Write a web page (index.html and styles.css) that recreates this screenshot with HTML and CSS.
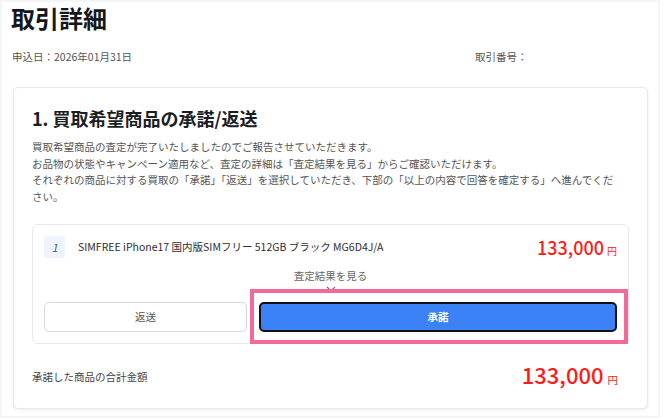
FILE: index.html
```html
<!DOCTYPE html>
<html lang="ja">
<head>
<meta charset="utf-8">
<title>取引詳細</title>
<link rel="stylesheet" href="styles.css">
</head>
<body>
<div class="page">
  <header class="header">
    <h1 class="title">取引詳細</h1>
    <div class="meta">
      <span class="date">申込日：2026年01月31日</span>
      <span class="txn">取引番号：</span>
    </div>
  </header>
  <section class="card">
    <h2 class="card-title">1. 買取希望商品の承諾/返送</h2>
    <p class="desc">買取希望商品の査定が完了いたしましたのでご報告させていただきます。<br>お品物の状態やキャンペーン適用など、査定の詳細は「査定結果を見る」からご確認いただけます。<br>それぞれの商品に対する買取の「承諾」「返送」を選択していただき、下部の「以上の内容で回答を確定する」へ進んでくだ<br>さい。</p>
    <div class="item">
      <div class="item-head">
        <span class="badge">1</span>
        <span class="name">SIMFREE iPhone17 国内版SIMフリー 512GB ブラック MG6D4J/A</span>
        <span class="price">133,000<small class="yen">円</small></span>
      </div>
      <div class="detail">
        <span class="detail-label">査定結果を見る</span>
        <svg class="chev" width="10" height="6" viewBox="0 0 10 6"><path d="M1 1 L5 5 L9 1" fill="none" stroke="#6b7280" stroke-width="1.2"/></svg>
      </div>
      <div class="actions">
        <button class="btn btn-return">返送</button>
        <div class="accept-wrap">
          <button class="btn btn-accept">承諾</button>
          <span class="highlight"></span>
        </div>
      </div>
    </div>
    <div class="total">
      <span class="total-label">承諾した商品の合計金額</span>
      <span class="total-price">133,000<small class="yen yen-lg">円</small></span>
    </div>
  </section>
</div>
</body>
</html>
```
FILE: styles.css
```css
* { box-sizing: border-box; }
html, body { margin: 0; padding: 0; background: #fff; }
body {
  font-family: "Noto Sans CJK JP", "Noto Sans", sans-serif;
  color: #333;
}
.page {
  width: 660px;
  height: 418px;
  border: 2px solid #f4f5f7;
  overflow: hidden;
}
.header { padding-left: 9px; }
.title {
  margin: 0;
  font-size: 24px;
  line-height: 32px;
  font-weight: 700;
  color: #14171c;
}
.meta {
  display: grid;
  grid-template-columns: 463px 1fr;
  margin-top: 15px;
  padding-left: 1px;
  font-size: 10.5px;
  line-height: 16px;
  color: #555;
}
.card {
  margin: 22px 10px 0 11px;
  border: 1px solid #e6e8eb;
  border-radius: 5px;
  box-shadow: 0 1px 3px rgba(0,0,0,0.08);
  padding: 17px 18px 16px 18px;
  background: #fff;
}
.card-title {
  margin: 0;
  font-size: 18px;
  line-height: 26px;
  font-weight: 700;
  color: #1b1e23;
}
.desc {
  margin: 8px 0 0;
  font-size: 10.5px;
  line-height: 16.7px;
  color: #555;
  white-space: nowrap;
}
.item {
  margin-top: 18px;
  border: 1px solid #e6e8eb;
  border-radius: 6px;
  padding: 11px;
}
.item-head {
  display: flex;
  align-items: center;
  height: 22px;
}
.badge {
  width: 21px;
  height: 22px;
  border-radius: 3px;
  background: #eef3fc;
  color: #3e5f91;
  font-style: italic;
  font-size: 11px;
  display: flex;
  align-items: center;
  justify-content: center;
}
.name {
  margin-left: 13px;
  font-size: 10.5px;
  color: #2e2e2e;
  flex: 1;
  margin-top: -1px;
}
.price {
  color: #ff1a1a;
  font-size: 18px;
  line-height: 22px;
  font-weight: 500;
  margin-top: 4px;
}
.yen {
  font-size: 10px;
  margin-left: 3px;
  font-weight: 400;
}
.detail {
  margin-top: 11px;
  display: flex;
  flex-direction: column;
  align-items: center;
}
.detail-label {
  font-size: 10.5px;
  line-height: 14px;
  color: #666;
}
.chev { margin-top: 3px; }
.actions {
  display: grid;
  grid-template-columns: 203px 1fr;
  gap: 12px;
  margin-top: 10px;
}
.btn {
  height: 30px;
  border-radius: 5px;
  font-family: inherit;
  font-size: 10.5px;
  cursor: pointer;
}
.btn-return {
  background: #fff;
  border: 1px solid #d6d9de;
  color: #555;
}
.accept-wrap { position: relative; }
.btn-accept {
  width: 100%;
  background: #3b82f6;
  border: 2px solid #111;
  color: #fff;
  font-weight: 700;
}
.highlight {
  position: absolute;
  left: -9px;
  right: -11px;
  top: -13px;
  bottom: -12px;
  border: 4px solid #f2699b;
  pointer-events: none;
}
.total {
  display: flex;
  justify-content: space-between;
  align-items: center;
  height: 30px;
  margin-top: 18px;
  padding-right: 11px;
}
.total-label {
  font-size: 10.5px;
  color: #444;
}
.total-price {
  color: #ff1a1a;
  font-size: 22px;
  line-height: 30px;
  font-weight: 500;
}
.yen-lg { font-size: 10.5px; margin-left: 4px; }
```
